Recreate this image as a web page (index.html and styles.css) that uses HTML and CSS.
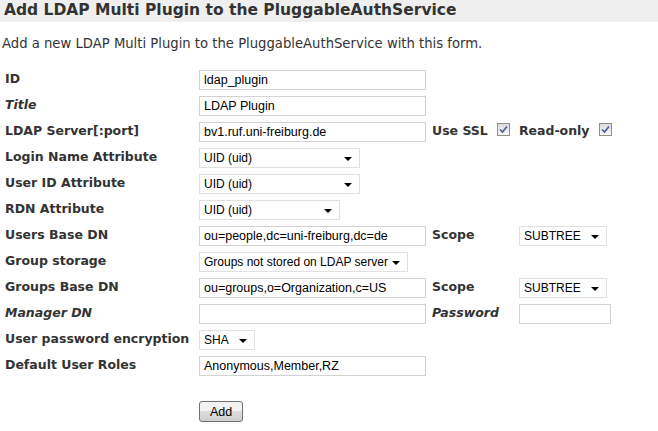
FILE: index.html
```html
<!DOCTYPE html>
<html>
<head>
    <title>Add LDAP Multi Plugin</title>
    <meta charset="UTF-8">
    <link rel="stylesheet" href="styles.css">
</head>
<body>

<h2 class="form-title">Add LDAP Multi Plugin to the PluggableAuthService</h2>

<p class="form-help">
    Add a new LDAP Multi Plugin to the PluggableAuthService with this form.
</p>

<form class="add-form">
<table class="form-table">
    <tr>
        <td class="form-label">ID</td>
        <td><input class="text wide" type="text" value="ldap_plugin"></td>
    </tr>
    <tr>
        <td class="form-optional">Title</td>
        <td><input class="text wide" type="text" value="LDAP Plugin"></td>
    </tr>
    <tr>
        <td class="form-label">LDAP Server[:port]</td>
        <td><input class="text wide" type="text" value="bv1.ruf.uni-freiburg.de"></td>
        <td colspan="2" class="form-label">
            Use SSL <span class="check"><svg width="11" height="11" viewBox="0 0 11 11"><path d="M2 5.5 L4.5 8 L9 2.5" fill="none" stroke="#4a5aa8" stroke-width="1.6"/></svg></span>
            &nbsp;Read-only <span class="check"><svg width="11" height="11" viewBox="0 0 11 11"><path d="M2 5.5 L4.5 8 L9 2.5" fill="none" stroke="#4a5aa8" stroke-width="1.6"/></svg></span>
        </td>
    </tr>
    <tr>
        <td class="form-label">Login Name Attribute</td>
        <td><div class="select w-attr">UID (uid)</div></td>
    </tr>
    <tr>
        <td class="form-label">User ID Attribute</td>
        <td><div class="select w-attr">UID (uid)</div></td>
    </tr>
    <tr>
        <td class="form-label">RDN Attribute</td>
        <td><div class="select w-rdn">UID (uid)</div></td>
    </tr>
    <tr>
        <td class="form-label">Users Base DN</td>
        <td><input class="text wide" type="text" value="ou=people,dc=uni-freiburg,dc=de"></td>
        <td class="form-label side">Scope</td>
        <td><div class="select w-scope">SUBTREE</div></td>
    </tr>
    <tr>
        <td class="form-label">Group storage</td>
        <td><div class="select w-groups">Groups not stored on LDAP server</div></td>
    </tr>
    <tr>
        <td class="form-label">Groups Base DN</td>
        <td><input class="text wide" type="text" value="ou=groups,o=Organization,c=US"></td>
        <td class="form-label side">Scope</td>
        <td><div class="select w-scope">SUBTREE</div></td>
    </tr>
    <tr>
        <td class="form-optional">Manager DN</td>
        <td><input class="text wide" type="text" value=""></td>
        <td class="form-optional side">Password</td>
        <td><input class="text short" type="password" value=""></td>
    </tr>
    <tr>
        <td class="form-label">User password encryption</td>
        <td><div class="select w-sha">SHA</div></td>
    </tr>
    <tr>
        <td class="form-label">Default User Roles</td>
        <td><input class="text wide" type="text" value="Anonymous,Member,RZ"></td>
    </tr>
    <tr>
        <td></td>
        <td class="submit-cell"><button class="button" type="button">Add</button></td>
    </tr>
</table>
</form>

</body>
</html>
```

FILE: styles.css
```css
body{
    margin: 0;
    font-family: "DejaVu Sans", Verdana, sans-serif;
    font-size: 13px;
    color: #333;
}

.form-title{
    margin: 0;
    padding: 1px 4px 2px;
    background-color: #efefef;
    font-size: 15.5px;
    font-weight: bold;
    line-height: 19px;
    color: #333;
}

.form-help{
    margin: 14px 0 0 2px;
    font-size: 13.2px;
    line-height: 16px;
}

.form-table{
    margin-top: 15px;
    margin-left: 2px;
    border-collapse: collapse;
}

.form-table td{
    padding: 3px 3px;
    height: 20px;
    vertical-align: top;
    white-space: nowrap;
}

.form-label,
.form-optional{
    width: 188px;
    font-size: 12.5px;
    font-weight: bold;
    line-height: 17px;
}
.form-optional{
    font-style: italic;
}
.form-table td.side{
    width: 81px;
}

.text{
    box-sizing: border-box;
    height: 20px;
    margin: 0;
    padding: 1px 4px;
    border: 1px solid #d2d2d2;
    font-family: "Liberation Sans", Arial, sans-serif;
    font-size: 12.5px;
    color: #000;
    vertical-align: top;
}
.wide{
    width: 227px;
}
.short{
    width: 92px;
}

.select{
    position: relative;
    box-sizing: border-box;
    height: 20px;
    padding: 2px 4px;
    border: 1px solid #e0e0e0;
    background-color: #fff;
    font-family: "Liberation Sans", Arial, sans-serif;
    font-size: 12px;
    line-height: 15px;
    color: #000;
}
.select:after{
    content: "";
    position: absolute;
    right: 7px;
    top: 8px;
    border-left: 4px solid transparent;
    border-right: 4px solid transparent;
    border-top: 4px solid #000;
}
.w-attr{ width: 161px; }
.w-rdn{ width: 141px; }
.w-groups{ width: 209px; }
.w-scope{ width: 88px; }
.w-sha{ width: 56px; }

.check{
    display: inline-block;
    box-sizing: border-box;
    width: 13px;
    height: 13px;
    margin-left: 5px;
    border: 1px solid #8e8f8f;
    background: linear-gradient(#dcdcdc, #f7f7f7);
    vertical-align: -1px;
}
.check svg{
    display: block;
}

.form-table td.submit-cell{
    padding-top: 22px;
}

.button{
    width: 44px;
    height: 21px;
    padding: 0;
    border: 1px solid #707070;
    border-radius: 3px;
    background: linear-gradient(#f2f2f2 50%, #dddddd 50%, #cfcfcf);
    font-family: "Liberation Sans", Arial, sans-serif;
    font-size: 12.5px;
    color: #000;
}
```
